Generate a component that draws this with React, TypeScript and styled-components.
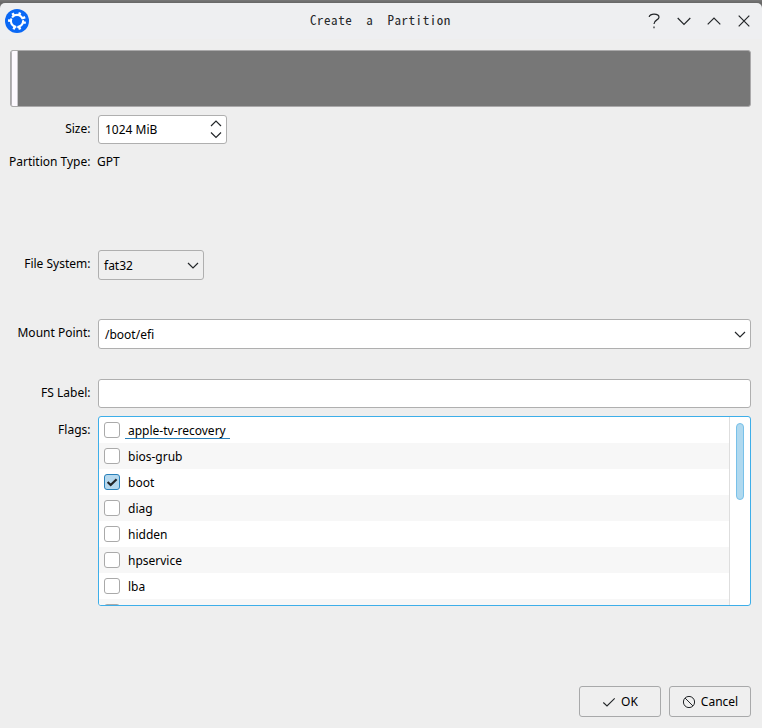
import React from "react";
import styled, { createGlobalStyle } from "styled-components";

const Global = createGlobalStyle`
  * { box-sizing: border-box; }
  body { margin: 0; background: #6f6f6f; }
`;

const Window = styled.div`
  width: 762px;
  height: 728px;
  padding-top: 3px;
  background: linear-gradient(#787878, #666 3px, #6c6c6c 4px);
  font: 12px/18px "Noto Sans", sans-serif;
  color: #000;
  overflow: hidden;
`;

const TitleBar = styled.header`
  height: 36px;
  display: flex;
  align-items: center;
  padding: 0 11px 0 5px;
  background: #eeeff1;
  border-radius: 5px 5px 0 0;
`;

const Title = styled.h1`
  margin: -2px 0 0 281px;
  font: 13px/18px "Noto Sans Mono CJK SC", "Noto Sans Mono CJK JP", "DejaVu Sans Mono", monospace;
  letter-spacing: 0.54px;
  white-space: pre;
  color: #26282a;
`;

const WindowButtons = styled.div`
  display: flex;
  gap: 16px;
  margin-left: auto;
`;

const Body = styled.main`
  height: 689px;
  padding: 11px 11px 11px 0;
  display: flex;
  flex-direction: column;
  background: #eeeeee;
`;

const PartitionBar = styled.div`
  height: 57px;
  margin-left: 10px;
  display: flex;
  flex: none;
  border: 1px solid #aaa9aa;
  border-radius: 3px;
  background: #777;
  overflow: hidden;
`;

const PartitionHandle = styled.div`
  width: 7px;
  border-left: 1px solid #b4b1b6;
  border-right: 1px solid #c9c7cb;
  background: #fdf9ff;
`;

const Row = styled.div<{ $top: number; $height: number }>`
  display: flex;
  flex: none;
  gap: 7.5px;
  margin-top: ${(p) => p.$top}px;
  height: ${(p) => p.$height}px;
`;

const Label = styled.label<{ $offset?: number }>`
  width: 90.5px;
  flex: none;
  text-align: right;
  white-space: nowrap;
  padding-top: ${(p) => p.$offset ?? 5}px;
`;

const Field = styled.div<{ $width?: number; $flat?: boolean }>`
  width: ${(p) => (p.$width ? `${p.$width}px` : "auto")};
  flex: ${(p) => (p.$width ? "none" : "1")};
  display: flex;
  align-items: center;
  justify-content: space-between;
  padding: 0 4px 0 ${(p) => (p.$flat ? 5 : 6)}px;
  border: 1px solid #afafaf;
  border-radius: 3px;
  background: ${(p) => (p.$flat ? "#efefef" : "#fff")};
`;

const Value = styled.span<{ $nudge?: number }>`
  padding-top: ${(p) => p.$nudge ?? 0}px;
`;

const PlainValue = styled(Value)`
  margin-left: -1px;
`;

const FlagList = styled.div`
  flex: 1;
  display: flex;
  border: 1px solid #3daee9;
  border-radius: 3px;
  background: #fff;
  overflow: hidden;
`;

const Flags = styled.div`
  flex: 1;
  height: 188px;
  overflow: hidden;
`;

const Flag = styled.div`
  height: 26px;
  display: flex;
  align-items: center;
  gap: 5px;
  padding-left: 5px;
  &:nth-child(even) { background: #f7f7f7; }
`;

const Check = styled.span<{ $on?: boolean }>`
  width: 16px;
  height: 16px;
  display: flex;
  border: 1px solid ${(p) => (p.$on ? "#2980b9" : "#aaa")};
  border-radius: 3px;
  background: ${(p) => (p.$on ? "#b5d8ee" : "#fff")};
`;

const FlagName = styled.span<{ $current?: boolean }>`
  height: 18px;
  padding: 0 4px 0 3px;
  line-height: 19px;
  border-bottom: 1px solid ${(p) => (p.$current ? "#2980b9" : "transparent")};
`;

const Track = styled.div`
  width: 21px;
  padding: 6px 0 0 6px;
  border-left: 1px solid #dedede;
`;

const Thumb = styled.div`
  width: 8px;
  height: 77px;
  border: 1px solid #79c1e9;
  border-radius: 4px;
  background: #b0d9ef;
`;

const Actions = styled.footer`
  display: flex;
  justify-content: flex-end;
  gap: 8px;
  margin-top: auto;
`;

const Button = styled.button`
  width: 82px;
  height: 31px;
  display: flex;
  align-items: center;
  justify-content: center;
  gap: 5px;
  padding: 0;
  border: 1px solid #a8a9aa;
  border-radius: 3px;
  background: #efefef;
  font: inherit;
  color: inherit;
`;

const Icon = ({ d, w = 14, h = 14, stroke = 1.2 }: { d: string; w?: number; h?: number; stroke?: number }) => (
  <svg width={w} height={h} viewBox={`0 0 ${w} ${h}`} fill="none" stroke="#232629" strokeWidth={stroke}>
    <path d={d} />
  </svg>
);

const teeth = [12, 70, 112, 183, 240, 290, 335];
const notches = [-12, 92, 210];

const Logo = () => (
  <svg width="24" height="24" viewBox="0 0 24 24">
    <circle cx="12" cy="12" r="12" fill="#0a68f5" />
    <circle cx="12" cy="12" r="6.1" fill="none" stroke="#fff" strokeWidth="2.1" />
    {teeth.map((a) => (
      <path key={a} d="M17.5 12H21" stroke="#fff" strokeWidth="2.5" transform={`rotate(${a} 12 12)`} />
    ))}
    {notches.map((a) => (
      <path key={a} d="M16 12H20" stroke="#0a68f5" strokeWidth="0.9" transform={`rotate(${a} 12 12)`} />
    ))}
  </svg>
);

const flags = ["apple-tv-recovery", "bios-grub", "boot", "diag", "hidden", "hpservice", "lba"];

export default function App() {
  return (
    <>
      <Global />
      <Window>
        <TitleBar>
          <Logo />
          <Title>{"Create  a  Partition"}</Title>
          <WindowButtons>
            <Icon d="M2.2 4C2.2 .2 12 .2 12 4.2C12 7.3 7 6.5 7 11M7 13.5V15.3" h={16} />
            <Icon d="M.7 5L7 11.3L13.3 5" h={16} />
            <Icon d="M.7 11.3L7 5L13.3 11.3" h={16} />
            <Icon d="M1.7 2.7L12.3 13.3M12.3 2.7L1.7 13.3" h={16} />
          </WindowButtons>
        </TitleBar>
        <Body>
          <PartitionBar><PartitionHandle /></PartitionBar>
          <Row $top={8} $height={29}>
            <Label>Size:</Label>
            <Field $width={129}>
              <Value>1024 MiB</Value>
              <Icon d="M1 7L6 2L11 7M1 13.5L6 18.5L11 13.5" w={12} h={21} />
            </Field>
          </Row>
          <Row $top={8} $height={20}>
            <Label $offset={1}>Partition Type:</Label>
            <PlainValue $nudge={1}>GPT</PlainValue>
          </Row>
          <Row $top={78} $height={30}>
            <Label>File System:</Label>
            <Field $width={106} $flat>
              <Value $nudge={2}>fat32</Value>
              <Icon d="M1 4L6 9L11 4" w={12} h={12} />
            </Field>
          </Row>
          <Row $top={39} $height={30}>
            <Label>Mount Point:</Label>
            <Field>
              <Value $nudge={2}>/boot/efi</Value>
              <Icon d="M1 4L6 9L11 4" w={12} h={12} />
            </Field>
          </Row>
          <Row $top={30} $height={29}>
            <Label>FS Label:</Label>
            <Field />
          </Row>
          <Row $top={8} $height={190}>
            <Label>Flags:</Label>
            <FlagList>
              <Flags>
                {flags.map((name, i) => (
                  <Flag key={name}>
                    <Check $on={name === "boot"}>
                      {name === "boot" && <Icon d="M2.6 7L5.7 10L11.6 4.2" stroke={2.2} />}
                    </Check>
                    <FlagName $current={i === 0}>{name}</FlagName>
                  </Flag>
                ))}
                <Flag><Check /></Flag>
              </Flags>
              <Track><Thumb /></Track>
            </FlagList>
          </Row>
          <Actions>
            <Button><Icon d="M1.3 7.5L5 11L12.7 3.3" stroke={1.1} />OK</Button>
            <Button>
              <svg width="14" height="14" viewBox="0 0 14 14" fill="none" stroke="#232629">
                <circle cx="7" cy="7" r="5.6" />
                <path d="M3 3L11 11" />
              </svg>
              Cancel
            </Button>
          </Actions>
        </Body>
      </Window>
    </>
  );
}
